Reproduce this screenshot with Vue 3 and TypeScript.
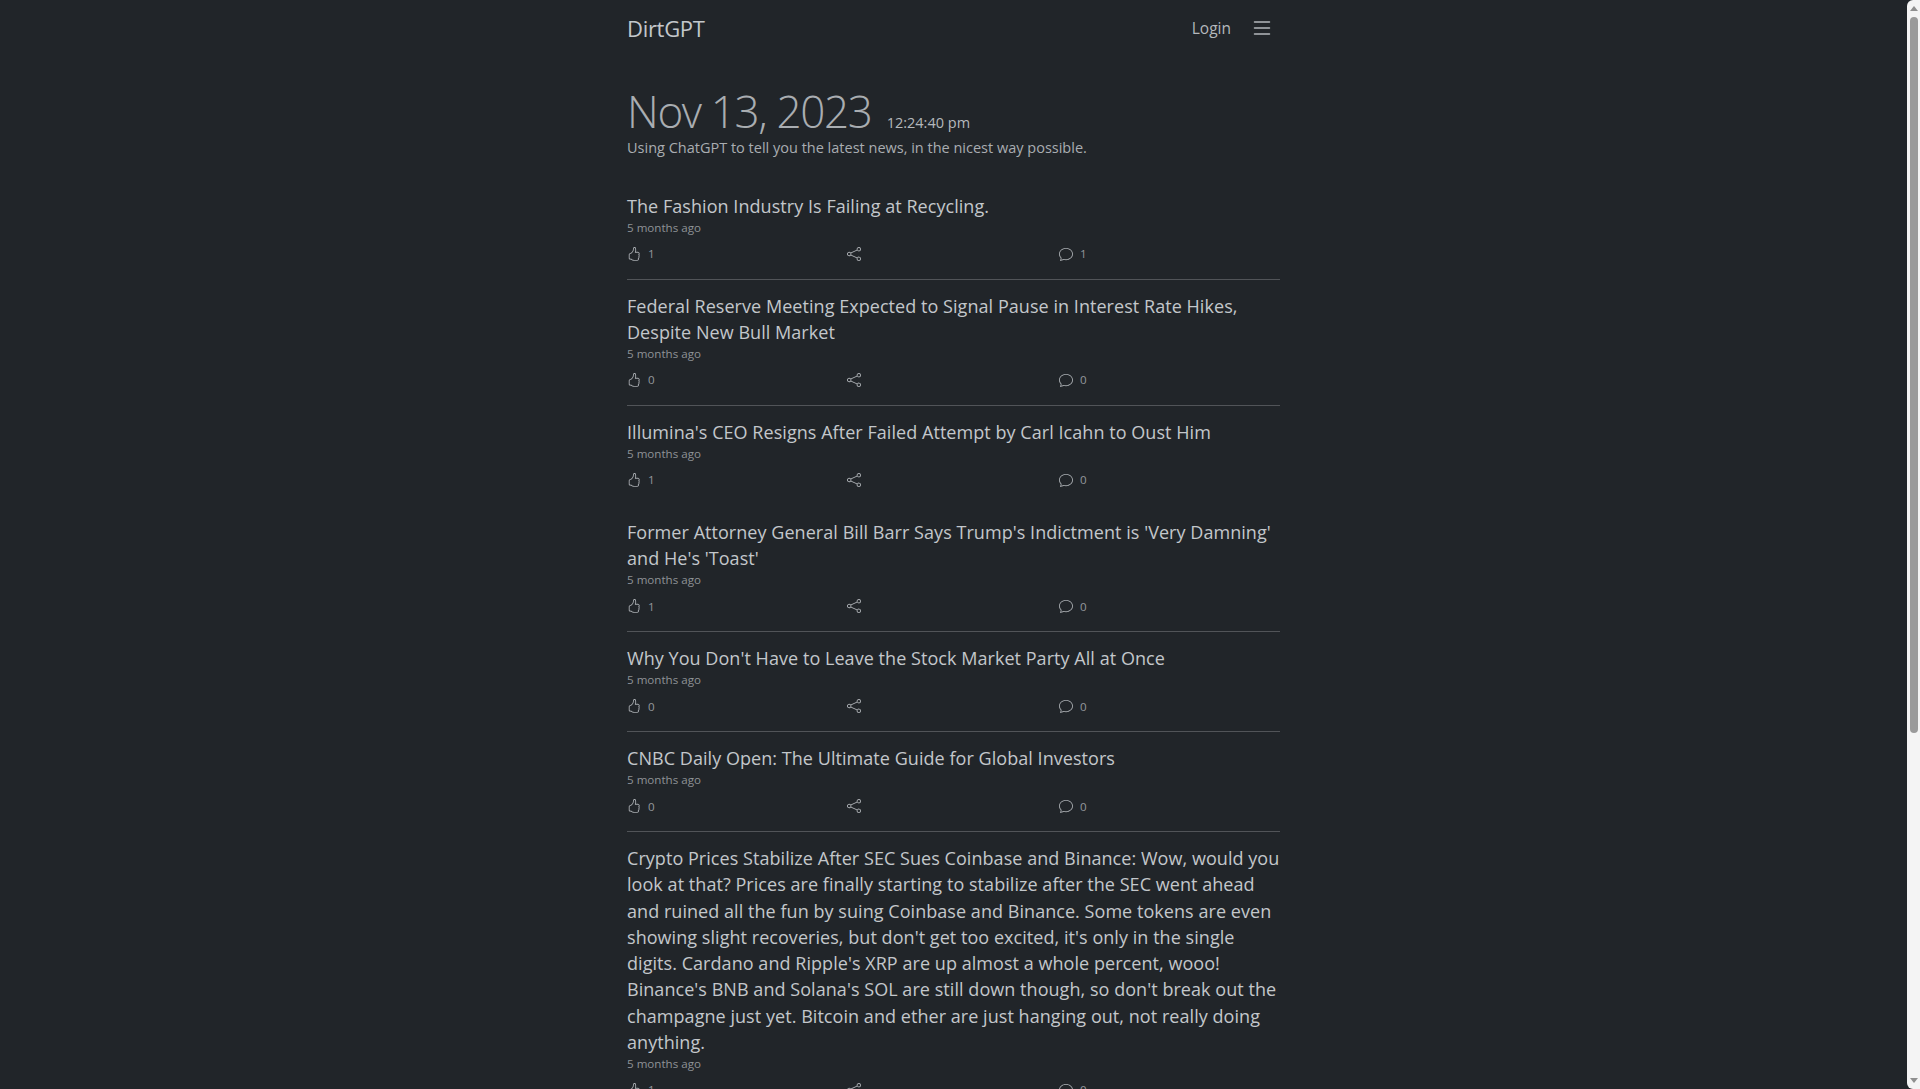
<script setup lang="ts">
interface Story {
  title: string
  likes: number
  comments: number
  plain?: boolean
}

const stories: Story[] = [
  { title: 'The Fashion Industry Is Failing at Recycling.', likes: 1, comments: 1 },
  { title: 'Federal Reserve Meeting Expected to Signal Pause in Interest Rate Hikes, Despite New Bull Market', likes: 0, comments: 0 },
  { title: "Illumina's CEO Resigns After Failed Attempt by Carl Icahn to Oust Him", likes: 1, comments: 0, plain: true },
  { title: "Former Attorney General Bill Barr Says Trump's Indictment is 'Very Damning' and He's 'Toast'", likes: 1, comments: 0 },
  { title: "Why You Don't Have to Leave the Stock Market Party All at Once", likes: 0, comments: 0 },
  { title: 'CNBC Daily Open: The Ultimate Guide for Global Investors', likes: 0, comments: 0 },
  { title: "Crypto Prices Stabilize After SEC Sues Coinbase and Binance: Wow, would you look at that? Prices are finally starting to stabilize after the SEC went ahead and ruined all the fun by suing Coinbase and Binance. Some tokens are even showing slight recoveries, but don't get too excited, it's only in the single digits. Cardano and Ripple's XRP are up almost a whole percent, wooo! Binance's BNB and Solana's SOL are still down though, so don't break out the champagne just yet. Bitcoin and ether are just hanging out, not really doing anything.", likes: 1, comments: 0 }
]
</script>

<template>
  <div class="window">
    <div class="page">
      <div class="container">
        <header class="navbar">
          <span class="brand">DirtGPT</span>
          <div class="nav-right">
            <span class="login">Login</span>
            <svg class="menu" width="24" height="24" viewBox="0 0 16 16" fill="currentColor">
              <path d="M2.5 12a.5.5 0 0 1 .5-.5h10a.5.5 0 0 1 0 1H3a.5.5 0 0 1-.5-.5m0-4a.5.5 0 0 1 .5-.5h10a.5.5 0 0 1 0 1H3a.5.5 0 0 1-.5-.5m0-4a.5.5 0 0 1 .5-.5h10a.5.5 0 0 1 0 1H3a.5.5 0 0 1-.5-.5" />
            </svg>
          </div>
        </header>

        <section class="hero">
          <h1 class="date">Nov 13, 2023 <small class="time">12:24:40 pm</small></h1>
          <p class="lead">Using ChatGPT to tell you the latest news, in the nicest way possible.</p>
        </section>

        <article v-for="story in stories" :key="story.title" :class="['story', { 'story-plain': story.plain }]">
          <h2 class="title">{{ story.title }}</h2>
          <div class="ago">5 months ago</div>
          <div class="actions">
            <div class="action">
              <svg width="14" height="14" viewBox="0 0 16 16" fill="currentColor">
                <path d="M8.864.046C7.908-.193 7.02.53 6.956 1.466c-.072 1.051-.23 2.016-.428 2.59-.125.36-.479 1.013-1.04 1.639-.557.623-1.282 1.178-2.131 1.41C2.685 7.288 2 7.87 2 8.72v4.001c0 .845.682 1.464 1.448 1.545 1.07.114 1.564.415 2.068.723l.048.03c.272.165.578.348.97.484.397.136.861.217 1.466.217h3.5c.937 0 1.599-.477 1.934-1.064a1.86 1.86 0 0 0 .254-.912c0-.152-.023-.312-.077-.464.201-.263.38-.578.488-.901.11-.33.172-.762.004-1.149.069-.13.12-.269.159-.403.077-.27.113-.568.113-.857 0-.288-.036-.585-.113-.856a2 2 0 0 0-.138-.362 1.9 1.9 0 0 0 .234-1.734c-.206-.592-.682-1.1-1.2-1.272-.847-.282-1.803-.276-2.516-.211a10 10 0 0 0-.443.05 9.4 9.4 0 0 0-.062-4.509A1.38 1.38 0 0 0 9.125.111zM11.5 14.721H8c-.51 0-.863-.069-1.14-.164-.281-.097-.506-.228-.776-.393l-.04-.024c-.555-.339-1.198-.731-2.49-.868-.333-.035-.554-.29-.554-.55V8.72c0-.254.226-.543.62-.65 1.095-.3 1.977-.996 2.614-1.708.635-.71 1.064-1.475 1.238-1.978.243-.7.407-1.768.482-2.85.025-.362.36-.594.667-.518l.262.066c.16.04.258.143.288.255a8.34 8.34 0 0 1-.145 4.725.5.5 0 0 0 .595.644l.003-.001.014-.003.058-.014a9 9 0 0 1 1.036-.157c.663-.06 1.457-.054 2.11.164.175.058.45.3.57.65.107.308.087.67-.266 1.022l-.353.353.353.354c.043.043.105.141.154.315.048.167.075.37.075.581 0 .212-.027.414-.075.582-.05.174-.111.272-.154.315l-.353.353.353.354c.047.047.109.177.005.488a2.2 2.2 0 0 1-.505.805l-.353.353.353.354c.006.005.041.05.041.17a.9.9 0 0 1-.121.416c-.165.288-.503.56-1.066.56z" />
              </svg>
              <span class="count">{{ story.likes }}</span>
            </div>
            <div class="action">
              <svg width="14" height="14" viewBox="0 0 16 16" fill="currentColor">
                <path d="M13.5 1a1.5 1.5 0 1 0 0 3 1.5 1.5 0 0 0 0-3M11 2.5a2.5 2.5 0 1 1 .603 1.628l-6.718 3.12a2.5 2.5 0 0 1 0 1.504l6.718 3.12a2.5 2.5 0 1 1-.488.876l-6.718-3.12a2.5 2.5 0 1 1 0-3.256l6.718-3.12A2.5 2.5 0 0 1 11 2.5m-8.5 4a1.5 1.5 0 1 0 0 3 1.5 1.5 0 0 0 0-3m11 5.5a1.5 1.5 0 1 0 0 3 1.5 1.5 0 0 0 0-3" />
              </svg>
            </div>
            <div class="action">
              <svg width="14" height="14" viewBox="0 0 16 16" fill="currentColor">
                <path d="M2.678 11.894a1 1 0 0 1 .287.801 11 11 0 0 1-.398 2c1.395-.323 2.247-.697 2.634-.893a1 1 0 0 1 .71-.074A8 8 0 0 0 8 14c3.996 0 7-2.807 7-6s-3.004-6-7-6-7 2.808-7 6c0 1.468.617 2.83 1.678 3.894m-.493 3.905a22 22 0 0 1-.713.129c-.2.032-.352-.176-.273-.362a10 10 0 0 0 .244-.637l.003-.01c.248-.72.45-1.548.524-2.319C.743 11.37 0 9.76 0 8c0-3.866 3.582-7 8-7s8 3.134 8 7-3.582 7-8 7a9 9 0 0 1-2.347-.306c-.52.263-1.639.742-3.468 1.105" />
              </svg>
              <span class="count">{{ story.comments }}</span>
            </div>
          </div>
        </article>
      </div>
    </div>

    <div class="scrollbar">
      <span class="arrow arrow-up"></span>
      <div class="track"><div class="thumb"></div></div>
      <span class="arrow arrow-down"></span>
    </div>
  </div>
</template>

<style>
body {
  background-color: #212529;
}
</style>

<style scoped>
.window {
  display: flex;
  height: 100vh;
  overflow: hidden;
  background-color: #212529;
  color: #dee2e6;
  font-family: "Open Sans", "Noto Sans", sans-serif;
}

.page {
  flex: 1;
  min-width: 0;
}

.container {
  width: 653px;
  margin: 0 auto;
}

.navbar {
  display: flex;
  justify-content: space-between;
  align-items: center;
  height: 56px;
}

.brand {
  font-size: 22px;
  letter-spacing: -0.3px;
  color: #c3c7cb;
}

.nav-right {
  display: flex;
  align-items: center;
  gap: 19px;
  color: #b4b8bc;
}

.login {
  font-size: 15.5px;
}

.menu {
  margin-right: 6px;
}

.hero {
  padding-top: 40px;
  margin-bottom: 21.5px;
}

.date {
  margin: 0;
  font-size: 44px;
  font-weight: 300;
  line-height: 31px;
  letter-spacing: -1.35px;
  color: #a9adb1;
}

.time {
  font-size: 14.5px;
  font-weight: 400;
  letter-spacing: 0;
  margin-left: 5px;
  color: #b4b8bc;
}

.lead {
  margin: 0;
  font-size: 14.5px;
  line-height: 20px;
  color: #a9adb1;
}

.story {
  padding: 13px 0;
  border-bottom: 1px solid #515458;
}

.story-plain {
  border-bottom-color: transparent;
}

.title {
  margin: 0;
  font-size: 18px;
  font-weight: 400;
  line-height: 26.24px;
  letter-spacing: 0.05px;
  color: #c3c7cb;
}

.ago {
  font-size: 11.6px;
  line-height: 18px;
  color: #8e9296;
}

.actions {
  display: grid;
  grid-template-columns: 220px 212px 1fr;
  margin-top: 4.8px;
  height: 24px;
  align-items: center;
  color: #a9adb1;
}

.action {
  display: flex;
  align-items: center;
  gap: 7px;
}

.count {
  font-size: 11.6px;
  color: #94989c;
}

.scrollbar {
  width: 13px;
  flex: none;
  display: flex;
  flex-direction: column;
  background-color: #f4f4f4;
  border-radius: 6px 0 0 6px;
}

.arrow {
  flex: none;
  height: 17px;
  display: flex;
  justify-content: center;
  align-items: center;
}

.arrow::before {
  content: "";
  border-left: 4px solid transparent;
  border-right: 4px solid transparent;
}

.arrow-up::before {
  border-bottom: 5px solid #8f8f8f;
}

.arrow-down::before {
  border-top: 5px solid #8f8f8f;
}

.track {
  flex: 1;
  display: flex;
  justify-content: center;
}

.thumb {
  width: 8px;
  height: 716px;
  background-color: #9a9a9a;
  border-radius: 4px;
}
</style>
